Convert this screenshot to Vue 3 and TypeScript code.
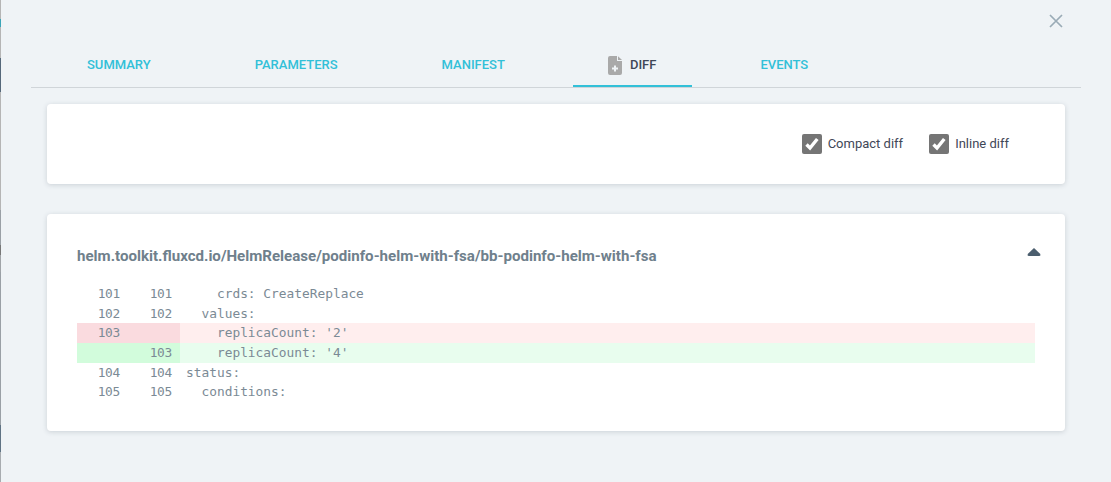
<script setup lang="ts">
interface DiffRow { left: string; right: string; code: string; kind?: 'del' | 'add' }
const tabs = ['SUMMARY', 'PARAMETERS', 'MANIFEST', 'DIFF', 'EVENTS']
const rows: DiffRow[] = [
  { left: '101', right: '101', code: '    crds: CreateReplace' },
  { left: '102', right: '102', code: '  values:' },
  { left: '103', right: '', code: '    replicaCount: \'2\'', kind: 'del' },
  { left: '', right: '103', code: '    replicaCount: \'4\'', kind: 'add' },
  { left: '104', right: '104', code: 'status:' },
  { left: '105', right: '105', code: '  conditions:' },
]
const sliver = 'linear-gradient(to bottom,#b5b5b5 0 19px,#3aa5b8 19px 27px,#b5b5b5 27px 58px,#55687a 58px 92px,#b5b5b5 92px 210px,#9aa0a6 210px 245px,#777 245px 255px,#a0a4a8 255px 272px,#9aa0a6 272px 425px,#5f7384 425px 452px,#a8acb0 452px 482px)'
</script>

<template>
  <div class="page">
    <div class="sliver" :style="{ background: sliver }"></div>
    <button class="close" aria-label="Close">
      <svg width="14" height="14" viewBox="0 0 14 14"><path d="M1 1 13 13M13 1 1 13" stroke="#9aabb6" stroke-width="1.7" fill="none" /></svg>
    </button>
    <nav class="tabs">
      <div v-for="t in tabs" :key="t" class="tab" :class="{ active: t === 'DIFF' }">
        <svg v-if="t === 'DIFF'" class="tab-icon" width="14" height="19" viewBox="0 0 14 19">
          <path d="M2 0H9V5H14V17a2 2 0 0 1-2 2H2a2 2 0 0 1-2-2V2a2 2 0 0 1 2-2Z" fill="#a9a9a9" />
          <path d="M10 0.3 14 4H10Z" fill="#a9a9a9" />
          <path d="M7 9.5v6M4 12.5h6" stroke="#eff3f6" stroke-width="2" fill="none" />
        </svg>
        {{ t }}
      </div>
    </nav>
    <section class="card options">
      <label class="check">
        <svg width="20" height="20" viewBox="0 0 20 20"><rect width="20" height="20" rx="2" fill="#757575" /><path d="M4.5 10.5 8 14 15.3 5" stroke="#fff" stroke-width="3.4" fill="none" /></svg>
        <span>Compact diff</span>
      </label>
      <label class="check">
        <svg width="20" height="20" viewBox="0 0 20 20"><rect width="20" height="20" rx="2" fill="#757575" /><path d="M4.5 10.5 8 14 15.3 5" stroke="#fff" stroke-width="3.4" fill="none" /></svg>
        <span>Inline diff</span>
      </label>
    </section>
    <section class="card diff">
      <header class="diff-head">
        <h3>helm.toolkit.fluxcd.io/HelmRelease/podinfo-helm-with-fsa/bb-podinfo-helm-with-fsa</h3>
        <svg width="14" height="8" viewBox="0 0 14 8"><path d="M7 0 13.3 6Q14 8 12 8H2Q0 8 .7 6Z" fill="#4b5e6e" /></svg>
      </header>
      <div class="code">
        <div v-for="(r, i) in rows" :key="i" class="row" :class="r.kind">
          <div class="gutter"><span>{{ r.left }}</span><span>{{ r.right }}</span></div>
          <pre>{{ r.code }}</pre>
        </div>
      </div>
    </section>
  </div>
</template>

<style>
html, body { margin: 0; background: #eff3f6; }
</style>

<style scoped>
.page {
  position: relative;
  width: 1111px;
  height: 482px;
  box-sizing: border-box;
  padding: 43px 30px 0 31px;
  background: #eff3f6;
  font-family: Roboto, "Liberation Sans", sans-serif;
  overflow: hidden;
}
.sliver { position: absolute; left: 0; top: 0; width: 1px; height: 482px; }
.close {
  position: absolute;
  left: 1049px;
  top: 14px;
  width: 14px;
  height: 14px;
  padding: 0;
  border: 0;
  background: none;
  line-height: 0;
}
.tabs {
  display: flex;
  gap: 32px;
  height: 45px;
  box-sizing: border-box;
  padding-left: 20px;
  border-bottom: 1px solid #d0d5d9;
}
.tab {
  display: flex;
  align-items: center;
  gap: 8px;
  height: 44px;
  box-sizing: border-box;
  padding: 0 36px 2px;
  font-size: 13px;
  font-weight: 500;
  color: #32c0d8;
  white-space: nowrap;
}
.tab.active {
  color: #3f4757;
  border-bottom: 2px solid #32c0d8;
  padding-bottom: 0;
  padding-top: 0;
}
.tab-icon { margin-left: -1px; margin-top: 2px; }
.card {
  margin: 0 16px 0 16px;
  background: #fff;
  border-radius: 4px;
  box-shadow: 0 1px 5px rgba(60, 75, 90, 0.2);
}
.options {
  display: flex;
  justify-content: flex-end;
  align-items: flex-start;
  gap: 26px;
  height: 80px;
  margin-top: 16px;
  padding: 30px 56px 0 0;
  box-sizing: border-box;
}
.check {
  display: flex;
  align-items: center;
  gap: 6px;
  font-size: 13px;
  color: #3f4757;
}
.check span { margin-bottom: 2px; }
.diff {
  height: 217px;
  margin-top: 30px;
  padding: 0 30px;
  box-sizing: border-box;
}
.diff-head {
  display: flex;
  justify-content: space-between;
  align-items: center;
  height: 84px;
}
.diff-head h3 {
  margin: 0;
  font-size: 15.08px;
  font-weight: 700;
  color: #6f808c;
}
.diff-head svg { margin: -8px -6px 0 0; }
.code {
  margin-top: -14px;
  font-family: "DejaVu Sans Mono", monospace;
  font-size: 12.85px;
  color: #7b8a95;
}
.row {
  display: flex;
  height: 19.7px;
  line-height: 19.7px;
}
.gutter {
  display: flex;
  gap: 29px;
  width: 103px;
  flex: none;
  box-sizing: border-box;
  padding-left: 20px;
}
.gutter span {
  width: 23px;
  flex: none;
  text-align: right;
  white-space: nowrap;
  letter-spacing: -0.3px;
}
pre {
  margin: 0;
  flex: 1;
  padding-left: 6px;
  font: inherit;
}
.del { background: #ffeeee; }
.del .gutter { background: #fadbdf; }
.add { background: #e8fdee; }
.add .gutter { background: #d2fcdc; }
</style>
